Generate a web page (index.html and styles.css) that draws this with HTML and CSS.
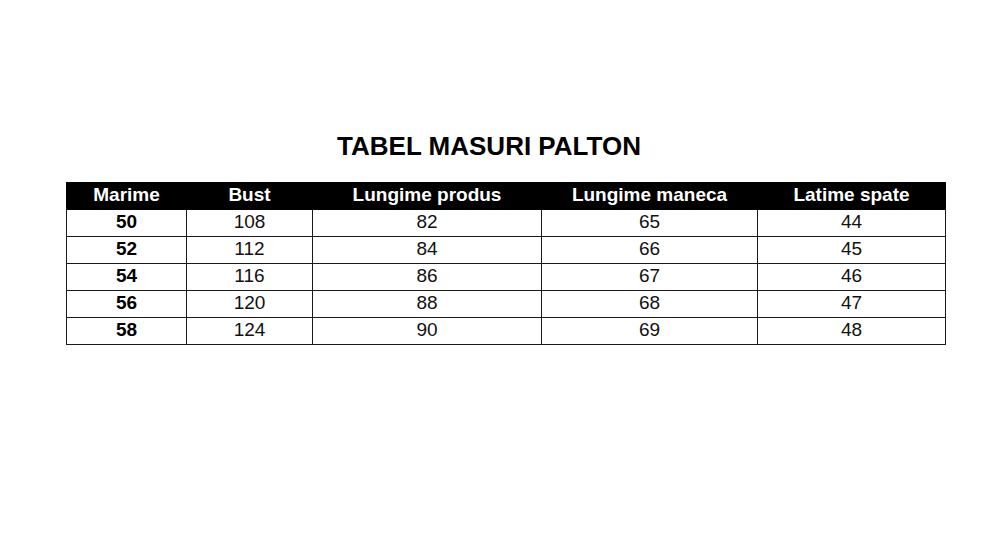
FILE: index.html
```html
<!DOCTYPE html>
<html lang="ro">
<head>
<meta charset="utf-8">
<title>Tabel masuri palton</title>
<link rel="stylesheet" href="styles.css">
</head>
<body>
<div class="sheet">
  <h1 class="title">TABEL MASURI PALTON</h1>
  <table class="sizes">
    <colgroup>
      <col class="c1"><col class="c2"><col class="c3"><col class="c4"><col class="c5">
    </colgroup>
    <thead>
      <tr><th>Marime</th><th>Bust</th><th>Lungime produs</th><th>Lungime maneca</th><th>Latime spate</th></tr>
    </thead>
    <tbody>
      <tr><td class="size">50</td><td>108</td><td>82</td><td>65</td><td>44</td></tr>
      <tr><td class="size">52</td><td>112</td><td>84</td><td>66</td><td>45</td></tr>
      <tr><td class="size">54</td><td>116</td><td>86</td><td>67</td><td>46</td></tr>
      <tr><td class="size">56</td><td>120</td><td>88</td><td>68</td><td>47</td></tr>
      <tr><td class="size">58</td><td>124</td><td>90</td><td>69</td><td>48</td></tr>
    </tbody>
  </table>
</div>
</body>
</html>
```

FILE: styles.css
```css
html, body {
  margin: 0;
  padding: 0;
  background: #fff;
}
body {
  font-family: "Liberation Sans", Arial, sans-serif;
  color: #000;
}
.sheet {
  padding: 131px 0 0 66px;
}
.title {
  width: 846px;
  margin: 0 0 20px;
  font-size: 26px;
  line-height: 31px;
  font-weight: bold;
  text-align: center;
  color: #000;
}
.sizes {
  width: 879px;
  border-collapse: collapse;
  table-layout: fixed;
  font-size: 19px;
}
.c1 { width: 120px; }
.c2 { width: 126px; }
.c3 { width: 229px; }
.c4 { width: 216px; }
.c5 { width: 188px; }
.sizes th {
  background: #000;
  color: #fff;
  font-weight: bold;
  line-height: 22px;
  padding: 1px 0 3px;
  border: 1px solid #000;
  text-align: center;
}
.sizes td {
  line-height: 22px;
  padding: 1px 0 3px;
  border: 1px solid #1a1a1a;
  text-align: center;
  color: #111;
}
.sizes td.size {
  font-weight: bold;
  color: #000;
}
```
